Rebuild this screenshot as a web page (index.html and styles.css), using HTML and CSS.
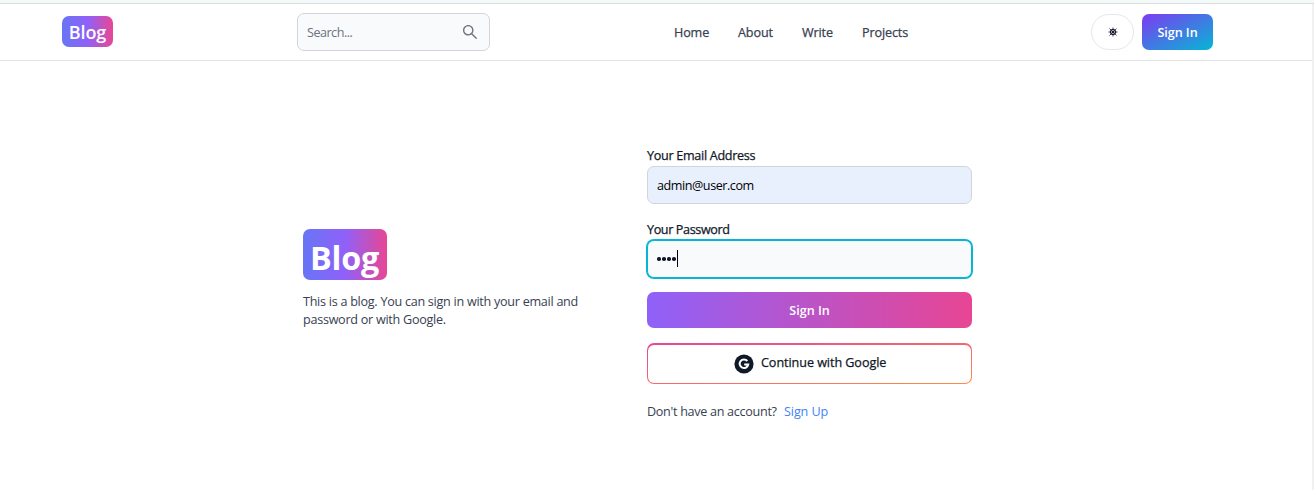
FILE: index.html
```html
<!DOCTYPE html>
<html lang="en">
<head>
<meta charset="utf-8">
<title>Blog</title>
<link rel="stylesheet" href="styles.css">
</head>
<body>
<div class="strip"></div>
<div class="page">
  <header class="navbar">
    <a class="logo logo-small">Blog</a>
    <div class="search">
      <span class="search-text">Search...</span>
      <svg class="search-icon" viewBox="0 0 1024 1024" fill="currentColor"><path d="M909.6 854.5L649.9 594.8C690.2 542.7 712 479 712 412c0-80.2-31.300-155.400-87.900-212.100-56.600-56.700-132-87.900-212.100-87.900s-155.500 31.300-212.100 87.900C143.200 256.500 112 331.800 112 412c0 80.100 31.300 155.500 87.900 212.100C256.500 680.800 331.800 712 412 712c67 0 130.600-21.800 182.700-62l259.700 259.600a8.200 8.200 0 0 0 11.600 0l43.600-43.500a8.200 8.200 0 0 0 0-11.600zM570.400 570.400C528 612.700 471.800 636 412 636s-116-23.300-158.400-65.600C211.300 528 188 471.800 188 412s23.300-116.100 65.600-158.400C296 211.300 352.200 188 412 188s116.100 23.200 158.400 65.600S636 352.200 636 412s-23.300 116.100-65.600 158.400z"/></svg>
    </div>
    <nav class="links">
      <a class="l-home">Home</a><a class="l-about">About</a><a class="l-write">Write</a><a>Projects</a>
    </nav>
    <div class="actions">
      <button class="theme" aria-label="Theme">
        <svg viewBox="0 0 10 10" class="theme-icon" fill="none" stroke="currentColor"><circle cx="5" cy="5" r="2.700" stroke-width="1"/><circle cx="5" cy="5" r="1" fill="currentColor" stroke="none"/><path stroke-width=".8" d="M5 .5v9M.5 5h9M1.500 1.500l7 7M8.500 1.500l-7 7"/></svg>
      </button>
      <button class="nav-sign"><span>Sign In</span></button>
    </div>
  </header>
  <main class="main">
    <section class="intro">
      <a class="logo logo-large">Blog</a>
      <p class="intro-text">This is a blog. You can sign in with your email and<br>password or with Google.</p>
    </section>
    <form class="form">
      <label class="label">Your Email Address</label>
      <div class="field filled"><span class="t-value">admin@user.com</span></div>
      <label class="label second">Your Password</label>
      <div class="field focused"><i class="dot"></i><i class="dot"></i><i class="dot"></i><i class="dot"></i><i class="caret"></i></div>
      <button type="button" class="submit"><span>Sign In</span></button>
      <button type="button" class="google">
        <span class="google-inner">
        <svg class="google-icon" viewBox="0 0 20 20"><circle cx="10" cy="10" r="9.600" fill="#111827"/><path d="M13.300 7A4.300 4.300 0 1 0 14.200 10.500H10.200" fill="none" stroke="#fff" stroke-width="2"/></svg>
        <span class="t-google">Continue with Google</span>
        </span>
      </button>
      <p class="account"><span class="t-account">Don't have an account?</span><a class="t-signup">Sign Up</a></p>
    </form>
  </main>
</div>
</body>
</html>
```
FILE: styles.css
```css
* { box-sizing: border-box; }
body {
  margin: 0;
  background: #fff;
  font-family: "Open Sans", "Noto Sans", sans-serif;
  font-size: 12.6px;
  line-height: 18px;
  color: #111827;
  white-space: nowrap;
}
.strip {
  height: 4px;
  background: #f2f9f8;
  border-bottom: 1px solid #dadfdf;
}
.page {
  height: 486px;
  overflow: hidden;
  background: linear-gradient(#f1f1f1, #f1f1f1) right / 2px 100% no-repeat;
}
button { font: inherit; margin: 0; padding: 0; border: 0; color: inherit; }
p { margin: 0; }
.navbar {
  display: grid;
  grid-template-columns: 235px 377px 417px auto;
  align-items: center;
  height: 57px;
  margin-right: 2px;
  padding-left: 62px;
  border-bottom: 1px solid #e2e3e5;
}
.logo {
  display: flex;
  align-items: center;
  justify-content: center;
  color: #fff;
  background: linear-gradient(to right, #6875f5, #8f61f9 50%, #e84694);
}
.logo-small {
  width: 51px;
  height: 31px;
  margin-bottom: 2px;
  border-radius: 7px;
  font-size: 18px;
  font-weight: 600;
  padding-top: 2px;
  letter-spacing: -.1px;
}
.logo-large {
  width: 84px;
  height: 51px;
  border-radius: 7px;
  font-size: 32.400px;
  font-weight: 700;
  padding: 4px 1px 0 0;
  letter-spacing: -.2px;
}
.search {
  display: flex;
  align-items: center;
  justify-content: space-between;
  width: 193px;
  height: 38px;
  padding: 0 10px 0 9px;
  border: 1px solid #d1d5db;
  border-radius: 7px;
  background: #f9fafb;
  color: #6b7280;
}
.search-text { padding-top: 2px; letter-spacing: -.5px; }
.search-icon { width: 18px; height: 18px; }
.links, .label, .t-google { font-weight: 500; -webkit-text-stroke: .25px currentColor; }
.links { display: flex; padding-top: 2px; color: #374151; letter-spacing: -.12px; }
.l-home { width: 64px; }
.l-about { width: 64px; }
.l-write { width: 60px; }
.actions { display: flex; gap: 8px; }
.theme {
  display: flex;
  align-items: center;
  justify-content: center;
  width: 43px;
  height: 36px;
  border: 1px solid #e5e7eb;
  border-radius: 18px;
  background: #fff;
}
.theme-icon { width: 10px; height: 10px; }
.nav-sign {
  width: 71px;
  height: 36px;
  padding-top: 2px;
  border-radius: 7px;
  color: #fff;
  font-weight: 600;
  letter-spacing: -.05px;
  background: linear-gradient(to bottom right, #7e3af2, #06b6d4);
}
.main { display: flex; }
.intro { width: 344px; margin-left: 303px; padding-top: 168px; flex: none; }
.intro-text { margin-top: 13px; color: #374151; letter-spacing: -.27px; }
.form {
  display: flex;
  flex-direction: column;
  width: 325px;
  padding-top: 86px;
}
.label { height: 19px; letter-spacing: -.3px; }
.second { margin-top: 17px; letter-spacing: -.38px; }
.field {
  display: flex;
  align-items: center;
  height: 38px;
  padding-left: 9px;
  border: 1px solid #d1d5db;
  border-radius: 7px;
}
.filled { background: #e8f0fe; color: #000; }
.t-value { padding-top: 2px; letter-spacing: -.45px; }
.focused {
  border-color: #06b6d4;
  box-shadow: 0 0 0 1px #06b6d4;
  background: #f9fafb;
}
.dot { width: 3.500px; height: 3.500px; margin-right: 1.500px; border-radius: 50%; background: #111827; }
.caret { width: 1px; height: 17px; margin-bottom: 1px; background: #000; }
.submit {
  height: 36px;
  margin-top: 14px;
  padding-top: 2px;
  border-radius: 7px;
  color: #fff;
  font-weight: 600;
  background: linear-gradient(to right, #8f61f9, #e84694);
}
.google {
  height: 41px;
  margin-top: 15px;
  padding: 2px 1px 1px;
  border-radius: 7px;
  background: linear-gradient(to bottom right, #e84694, #ff8a4c);
}
.google-inner {
  display: flex;
  align-items: center;
  height: 38px;
  padding-left: 86px;
  border-radius: 6px;
  background: #fff;
}
.google-icon { width: 20px; height: 20px; margin-right: 8px; }
.t-google { margin-left: -1px; padding-bottom: 2px; letter-spacing: -.06px; }
.account { display: flex; margin-top: 19px; color: #374151; letter-spacing: -.3px; }
.t-account { width: 137px; }
.t-signup { color: #3f83f8; letter-spacing: -.1px; }
```
